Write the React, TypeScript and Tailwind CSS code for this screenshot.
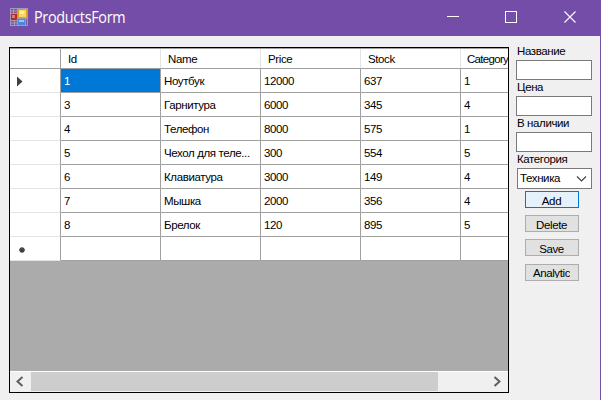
import React from "react";

const columns = ["Id", "Name", "Price", "Stock", "Category"];
const rows = [
  ["1", "Ноутбук", "12000", "637", "1"],
  ["3", "Гарнитура", "6000", "345", "4"],
  ["4", "Телефон", "8000", "575", "1"],
  ["5", "Чехол для теле...", "300", "554", "5"],
  ["6", "Клавиатура", "3000", "149", "4"],
  ["7", "Мышка", "2000", "356", "4"],
  ["8", "Брелок", "120", "895", "5"],
  ["", "", "", "", ""],
];

function AppIcon() {
  return (
    <svg className="ml-[10px] mt-2 h-[18px] w-[18px] shrink-0" viewBox="0 0 18 18">
      <rect width="18" height="18" fill="#a597b5" />
      <path d="M1 1h6v4H1zM1 13h6v4H1zM16 11h1v6h-1z" fill="#765b98" />
      <path d="M3.500 1v4M4.500 13v4M1 3h6M1 15h6" stroke="#a597b5" />
      <rect x="8" y="1" width="9" height="9" fill="#d9a425" />
      <rect x="9" y="2" width="7" height="7" fill="#fbd75c" />
      <rect x="10" y="3" width="4" height="3" fill="#ffedab" />
      <rect x="1" y="6" width="6" height="6" fill="#b12b2a" />
      <rect x="2" y="7" width="3" height="3" fill="#df7770" />
      <rect x="8" y="11" width="7" height="6" fill="#4a88dc" />
      <rect x="9" y="12" width="5" height="2" fill="#9bc7f5" />
    </svg>
  );
}

function TitleBar() {
  return (
    <header className="flex h-9 bg-[#744da9] text-white">
      <AppIcon />
      <span className="ml-[6px] mt-[7px] origin-left scale-x-[0.9] whitespace-nowrap font-['Open_Sans','Noto_Sans',sans-serif] text-[16px] leading-[20px] tracking-[-0.35px]">
        ProductsForm
      </span>
      <svg className="ml-auto h-9 w-[176px] shrink-0" viewBox="0 0 176 36" fill="none" stroke="#fff">
        <path d="M23 16.500h12M81.500 11.500h11v11h-11z" shapeRendering="crispEdges" />
        <path d="M140.500 11.500l11 11M151.500 11.500l-11 11" strokeWidth="1.1" />
      </svg>
    </header>
  );
}

function RowMarker({ index }: { index: number }) {
  return (
    <div className="h-6 w-[51px] shrink-0 border-b border-r border-b-[#e3e3e3] border-r-[#a0a0a0] bg-white">
      {index === 0 && (
        <svg className="h-[23px] w-[50px]" viewBox="0 0 50 23">
          <path d="M7 7.500l5.500 5l-5.500 5z" fill="#404040" />
        </svg>
      )}
      {index === 7 && (
        <svg className="h-[23px] w-[50px]" viewBox="0 0 50 23">
          <path d="M12 10v6M9 13h6M10 11l4 4M14 11l-4 4" stroke="#404040" strokeWidth="1.3" />
        </svg>
      )}
    </div>
  );
}

function Grid() {
  return (
    <div className="ml-[9px] mt-[11px] flex h-[346px] w-[500px] shrink-0 flex-col overflow-hidden border border-black bg-[#ababab]">
      <div className="flex h-[21px] w-[551px] shrink-0 border-b border-t border-b-[#a0a0a0] border-t-[#a0a0a0] bg-white">
        <div className="w-[51px] shrink-0 border-r border-[#a0a0a0]" />
        {columns.map((name) => (
          <div
            key={name}
            className={
              "shrink-0 border-r border-[#e3e3e3] leading-[20px] " +
              (name === "Category" ? "w-[48px] pl-[6px] tracking-[-0.7px]" : "w-[100px] pl-[7px]")
            }
          >
            {name}
          </div>
        ))}
      </div>
      {rows.map((row, r) => (
        <div key={r} className="flex h-6 w-[551px] shrink-0">
          <RowMarker index={r} />
          {row.map((value, c) => (
            <div
              key={c}
              className={
                "h-6 w-[100px] shrink-0 whitespace-nowrap border-b border-r border-[#a0a0a0] pl-[3px] leading-[24px] " +
                (r === 0 && c === 0 ? "bg-[#0078d7] text-white" : "bg-white")
              }
            >
              {value}
            </div>
          ))}
        </div>
      ))}
      <div className="mt-auto flex h-[21px] shrink-0 border-t border-white bg-[#f0f0f0]">
        <svg className="h-5 w-[21px]" viewBox="0 0 21 20" fill="none" stroke="#606060" strokeWidth="2">
          <path d="M12.500 5l-5 4.500l5 4.500" />
        </svg>
        <div className="h-[19px] w-[407px] bg-[#cdcdcd]" />
        <svg className="ml-auto h-5 w-[21px]" viewBox="0 0 21 20" fill="none" stroke="#606060" strokeWidth="2">
          <path d="M7.500 5l5 4.500l-5 4.500" />
        </svg>
      </div>
    </div>
  );
}

function Field({ label }: { label: string }) {
  return (
    <label className="block h-9">
      <span className="ml-px block h-4 whitespace-nowrap leading-[15px]">{label}</span>
      <span className="block h-5 w-[76px] border border-[#7a7a7a] bg-white" />
    </label>
  );
}

const button =
  "flex h-[17px] w-[54px] justify-center whitespace-nowrap border pr-px leading-[18px] ";

function Sidebar() {
  return (
    <aside className="ml-[7px] mt-[8px] w-[76px]">
      <Field label="Название" />
      <Field label="Цена" />
      <Field label="В наличии" />
      <div className="ml-px h-4 leading-[15px]">Категория</div>
      <div className="ml-px flex h-[21px] w-[75px] justify-between border border-[#7a7a7a] bg-white pl-[2px] leading-[19px]">
        Техника
        <svg className="h-[19px] w-[18px]" viewBox="0 0 18 19" fill="none" stroke="#404040" strokeWidth="1.1">
          <path d="M4 7.500l4.500 4.500l4.500-4.500" />
        </svg>
      </div>
      <div className="ml-[9px] mt-[2px]">
        <button className={button + "border-[#0078d7] bg-[#e5f1fb]"}>Add</button>
        <button className={button + "mt-[7px] border-[#adadad] bg-[#e1e1e1]"}>Delete</button>
        <button className={button + "mt-[7px] border-[#adadad] bg-[#e1e1e1]"}>Save</button>
        <button className={button + "mt-[8px] border-[#adadad] bg-[#e1e1e1]"}>
          <span className="block h-[13px] overflow-hidden leading-[17px]">Analytic</span>
        </button>
      </div>
    </aside>
  );
}

export default function App() {
  return (
    <div className="h-[400px] w-[601px] overflow-hidden border-r border-[#744da9] bg-[#f0f0f0] font-['Liberation_Sans',Arial,sans-serif] text-[11.5px] tracking-[-0.38px] text-black">
      <TitleBar />
      <main className="flex">
        <Grid />
        <Sidebar />
      </main>
    </div>
  );
}
